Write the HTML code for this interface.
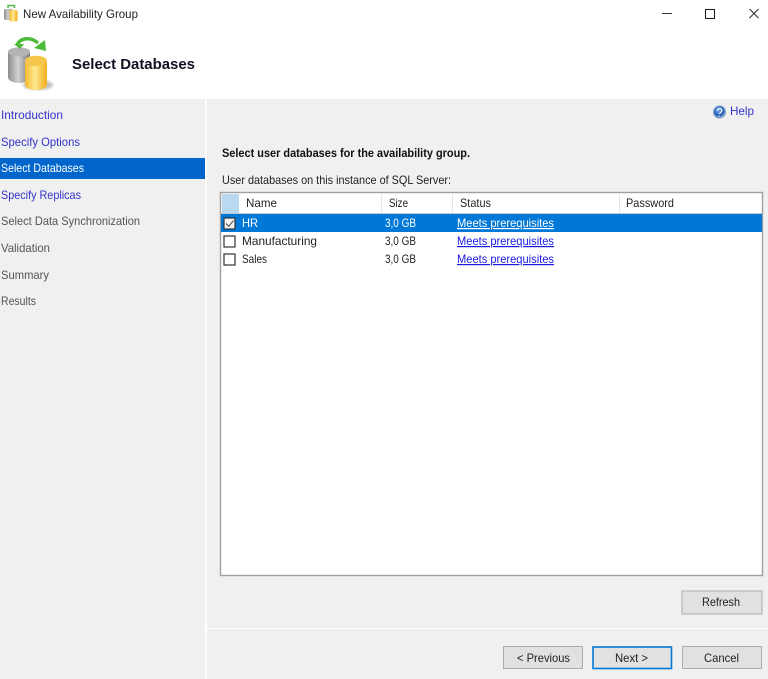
<!DOCTYPE html>
<html lang="en">
<head>
<meta charset="utf-8">
<title>New Availability Group</title>
<style>
html,body{margin:0;padding:0;width:768px;height:679px;overflow:hidden;background:#fff}
svg{display:block;font-family:"Liberation Sans",sans-serif;font-size:12px;filter:blur(.3px)}
.n{fill:#1f1f1f}
.b{fill:#3333cc}
.g{fill:#555}
.w{fill:#fff}
</style>
</head>
<body>
<svg width="768" height="679" viewBox="0 0 768 679" xmlns="http://www.w3.org/2000/svg">
<defs>
<linearGradient id="gy" x1="0" x2="1" y1="0" y2="0"><stop offset="0" stop-color="#8d8d8d"/><stop offset=".45" stop-color="#d2d2d2"/><stop offset="1" stop-color="#7a7a7a"/></linearGradient>
<linearGradient id="yl" x1="0" x2="1" y1="0" y2="0"><stop offset="0" stop-color="#f4b92e"/><stop offset=".45" stop-color="#ffe98f"/><stop offset="1" stop-color="#f0ac1c"/></linearGradient>
<radialGradient id="hp" cx=".4" cy=".35" r=".7"><stop offset="0" stop-color="#7fb0e6"/><stop offset=".6" stop-color="#1f5fb8"/><stop offset="1" stop-color="#9fb6d2"/></radialGradient>
<filter id="bl"><feGaussianBlur stdDeviation="1.4"/></filter>
</defs>

<rect width="768" height="679" fill="#fff"/>
<rect x="0" y="99" width="205" height="580" fill="#f0f0f0"/>
<rect x="207" y="99" width="561" height="580" fill="#f0f0f0"/>

<!-- title icon -->
<path d="M8 8 V5.500 H14.500 V8" fill="none" stroke="#55b84a" stroke-width="1.500"/>
<rect x="4" y="9" width="9" height="11" rx="2" fill="url(#gy)"/>
<rect x="9.500" y="10" width="8" height="11.500" rx="2" fill="url(#yl)"/>
<text x="23" y="18" class="n" textLength="115" lengthAdjust="spacingAndGlyphs">New Availability Group</text>

<!-- window controls -->
<rect x="662" y="13" width="10" height="1" fill="#333"/>
<rect x="705.500" y="9.500" width="9" height="9" fill="none" stroke="#222" stroke-width="1.100"/>
<path d="M749.500 9 L758.500 18 M758.500 9 L749.500 18" stroke="#333" stroke-width="1.100" fill="none"/>

<!-- header icon -->
<ellipse cx="38" cy="85" rx="15" ry="5" fill="#777" opacity=".45" filter="url(#bl)"/>
<path d="M8 52 C8 46 30 46 30 52 L30 77 C30 85 8 85 8 77 Z" fill="url(#gy)"/>
<ellipse cx="19" cy="52" rx="11" ry="4.500" fill="#b4b4b4"/>
<path d="M25 61 C25 54 47 54 47 61 L47 84 C47 92 25 92 25 84 Z" fill="url(#yl)"/>
<ellipse cx="36" cy="61" rx="11" ry="5" fill="#f6c64c"/>
<path d="M17 45 C21 37 31 37 38 43" fill="none" stroke="#4dbb3a" stroke-width="3.400"/>
<path d="M34 48 L46 51 L45 40 Z" fill="#4dbb3a"/>
<path d="M14 44 L24 44 L20 49 Z" fill="#4dbb3a"/>
<text x="72" y="69" font-size="15" font-weight="bold" fill="#101020" textLength="123" lengthAdjust="spacingAndGlyphs">Select Databases</text>

<!-- nav -->
<rect x="0" y="158" width="205" height="21" fill="#0066cc"/>
<text x="1" y="119" class="b" textLength="62" lengthAdjust="spacingAndGlyphs">Introduction</text>
<text x="1" y="146" class="b" textLength="79" lengthAdjust="spacingAndGlyphs">Specify Options</text>
<text x="1" y="172" class="w" textLength="83" lengthAdjust="spacingAndGlyphs">Select Databases</text>
<text x="1" y="199" class="b" textLength="80" lengthAdjust="spacingAndGlyphs">Specify Replicas</text>
<text x="1" y="225" class="g" textLength="139" lengthAdjust="spacingAndGlyphs">Select Data Synchronization</text>
<text x="1" y="252" class="g" textLength="49" lengthAdjust="spacingAndGlyphs">Validation</text>
<text x="1" y="279" class="g" textLength="48" lengthAdjust="spacingAndGlyphs">Summary</text>
<text x="1" y="305" class="g" textLength="35" lengthAdjust="spacingAndGlyphs">Results</text>

<!-- help -->
<circle cx="719.500" cy="112" r="6.200" fill="url(#hp)" stroke="#9fb6d2" stroke-width="1"/>
<path d="M717.500 110.500 C717.500 108 722 108 722 110.500 C722 112 720 112 719.500 114 M719 115.500 L719 116.500" fill="none" stroke="#fff" stroke-width="1.200"/>
<text x="730" y="115" class="b" textLength="24" lengthAdjust="spacingAndGlyphs">Help</text>

<!-- headings -->
<text x="222" y="157" font-weight="bold" fill="#111" textLength="248" lengthAdjust="spacingAndGlyphs">Select user databases for the availability group.</text>
<text x="222" y="184" class="n" textLength="229" lengthAdjust="spacingAndGlyphs">User databases on this instance of SQL Server:</text>

<!-- table -->
<rect x="220.500" y="192.500" width="542" height="383" fill="#fff" stroke="#a0a0a0" stroke-width="1.400"/>
<rect x="222" y="194" width="17" height="19" fill="#b9d8f2"/>
<rect x="221" y="213" width="541" height="1" fill="#c8c8c8"/>
<rect x="381" y="193" width="1" height="20" fill="#e5e5e5"/>
<rect x="452" y="193" width="1" height="20" fill="#e5e5e5"/>
<rect x="619" y="193" width="1" height="20" fill="#e5e5e5"/>
<text x="246" y="207" class="n" textLength="31" lengthAdjust="spacingAndGlyphs">Name</text>
<text x="389" y="207" class="n" textLength="19" lengthAdjust="spacingAndGlyphs">Size</text>
<text x="460" y="207" class="n" textLength="31" lengthAdjust="spacingAndGlyphs">Status</text>
<text x="626" y="207" class="n" textLength="48" lengthAdjust="spacingAndGlyphs">Password</text>

<rect x="221" y="214" width="541" height="18" fill="#0078d7"/>

<rect x="224" y="218" width="11" height="11" fill="#f3f3f3" stroke="#333" stroke-width="1.200"/>
<path d="M226 223.500 L228.700 226.300 L233.500 220.500" fill="none" stroke="#555" stroke-width="1.100"/>
<rect x="224" y="236" width="11" height="11" fill="#fff" stroke="#333" stroke-width="1.200"/>
<rect x="224" y="254" width="11" height="11" fill="#fff" stroke="#333" stroke-width="1.200"/>

<text x="242" y="227" class="w" textLength="16" lengthAdjust="spacingAndGlyphs">HR</text>
<text x="242" y="245" class="n" textLength="75" lengthAdjust="spacingAndGlyphs">Manufacturing</text>
<text x="242" y="263" class="n" textLength="25" lengthAdjust="spacingAndGlyphs">Sales</text>
<text x="385" y="227" class="w" textLength="31" lengthAdjust="spacingAndGlyphs">3,0 GB</text>
<text x="385" y="245" class="n" textLength="31" lengthAdjust="spacingAndGlyphs">3,0 GB</text>
<text x="385" y="263" class="n" textLength="31" lengthAdjust="spacingAndGlyphs">3,0 GB</text>
<text x="457" y="227" class="w" text-decoration="underline" textLength="97" lengthAdjust="spacingAndGlyphs">Meets prerequisites</text>
<text x="457" y="245" fill="#1a1ae6" text-decoration="underline" textLength="97" lengthAdjust="spacingAndGlyphs">Meets prerequisites</text>
<text x="457" y="263" fill="#1a1ae6" text-decoration="underline" textLength="97" lengthAdjust="spacingAndGlyphs">Meets prerequisites</text>

<!-- buttons -->
<rect x="682" y="591" width="80" height="23" fill="#e1e1e1" stroke="#adadad" stroke-width="1"/>
<text x="702" y="606" class="n" textLength="38" lengthAdjust="spacingAndGlyphs">Refresh</text>

<rect x="207" y="628" width="561" height="1" fill="#fbfbfb"/>

<rect x="503.500" y="646.500" width="79" height="22" fill="#e1e1e1" stroke="#adadad" stroke-width="1"/>
<text x="517" y="662" class="n" textLength="53" lengthAdjust="spacingAndGlyphs">&lt; Previous</text>
<rect x="593" y="647" width="78.500" height="21.500" fill="#e1e1e1" stroke="#0078d7" stroke-width="1.600"/>
<text x="615" y="662" class="n" textLength="33" lengthAdjust="spacingAndGlyphs">Next &gt;</text>
<rect x="682.500" y="646.500" width="79" height="22" fill="#e1e1e1" stroke="#adadad" stroke-width="1"/>
<text x="704" y="662" class="n" textLength="35" lengthAdjust="spacingAndGlyphs">Cancel</text>
</svg>
</body>
</html>
